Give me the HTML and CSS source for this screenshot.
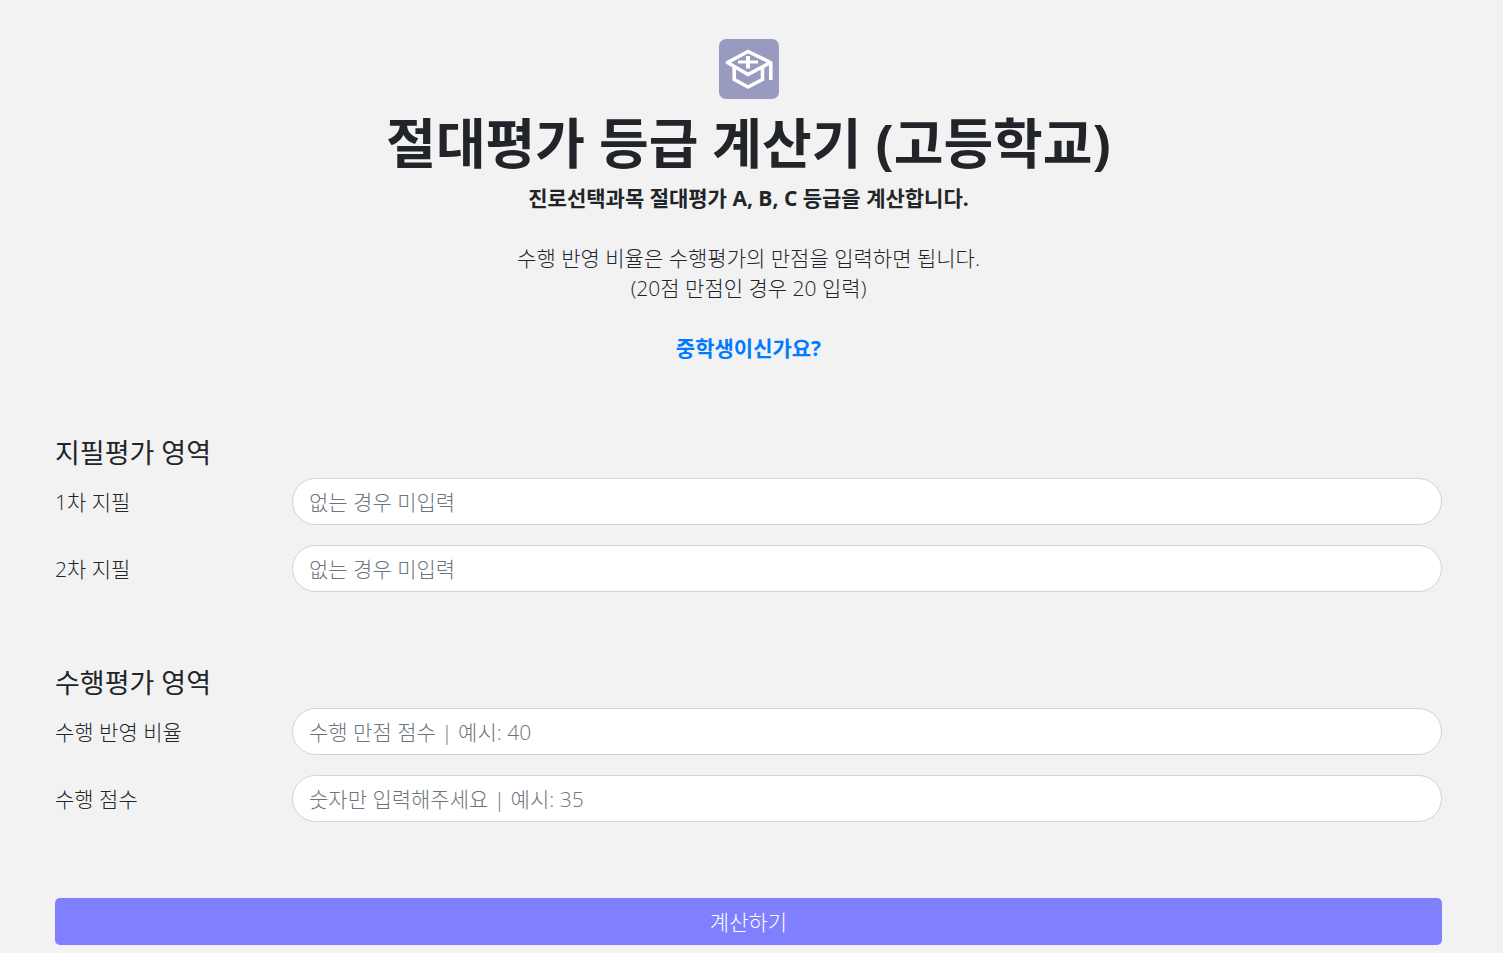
FILE: index.html
```html
<!DOCTYPE html>
<html lang="ko">
<head>
  <meta charset="UTF-8">
  <meta name="viewport" content="width=device-width, initial-scale=1">
  <title>절대평가 등급 계산기 (고등학교)</title>
  <link rel="stylesheet" href="styles.css">
</head>
<body>

  <div class="container">
    <!-- HEADER -->
    <header class="header">
      <svg class="logo" viewBox="0 0 60 60" aria-hidden="true">
        <rect width="60" height="60" rx="7" fill="#989bbf"/>
        <g fill="none" stroke="#fff" stroke-width="3.6" stroke-linejoin="round">
          <path d="M8.5 23.5 29 12.5 51.5 23.5 29 35.5Z"/>
          <path d="M15.2 28V40.5L29 48 43.5 40.5V28"/>
          <path d="M51.8 23.5V41"/>
          <path d="M29 17V29.5" stroke-width="4"/>
          <path d="M19 23H39" stroke-width="3"/>
        </g>
      </svg>
      <h1>절대평가 등급 계산기 (고등학교)</h1>
      <p><b>진로선택과목 절대평가 A, B, C 등급을 계산합니다.</b></p>
      <p>수행 반영 비율은 수행평가의 만점을 입력하면 됩니다.<br>(20점 만점인 경우 20 입력)</p>
      <a class="switch" href="#">중학생이신가요?</a>
    </header>

    <form>
      <!-- 지필평가 -->
      <section class="area">
        <h2>지필평가 영역</h2>
        <div class="row">
          <label for="exam1">1차 지필</label>
          <input type="text" id="exam1" placeholder="없는 경우 미입력">
        </div>
        <div class="row">
          <label for="exam2">2차 지필</label>
          <input type="text" id="exam2" placeholder="없는 경우 미입력">
        </div>
      </section>

      <!-- 수행평가 -->
      <section class="area">
        <h2>수행평가 영역</h2>
        <div class="row">
          <label for="ratio">수행 반영 비율</label>
          <input type="text" id="ratio" placeholder="수행 만점 점수 | 예시: 40">
        </div>
        <div class="row">
          <label for="score">수행 점수</label>
          <input type="text" id="score" placeholder="숫자만 입력해주세요 | 예시: 35">
        </div>
      </section>

      <button type="button" class="submit">계산하기</button>
    </form>
  </div>

</body>
</html>
```

FILE: styles.css
```css
* {
  box-sizing: border-box;
}
body {
  margin: 0;
  background: #f2f2f2;
  color: #212529;
  font-family: "Open Sans", "Noto Sans CJK KR", sans-serif;
  font-size: 21px;
  font-weight: 300;
  line-height: 30px;
}
.container {
  padding: 39px 61px 8px 55px;
}
.header {
  margin-bottom: 75px;
  text-align: center;
}
.logo {
  display: block;
  width: 60px;
  height: 60px;
  margin: 0 auto 14px;
}
h1 {
  margin: 0 0 10px;
  font-size: 54px;
  line-height: 60px;
  font-weight: 700;
}
p {
  margin: 0 0 30px;
}
b {
  font-weight: 700;
}
.switch {
  color: #007bff;
  font-weight: 700;
  text-decoration: none;
}
.area {
  margin-bottom: 76px;
}
h2 {
  margin: 0 0 10px;
  font-size: 27px;
  line-height: 30px;
  font-weight: 400;
}
.row {
  display: grid;
  grid-template-columns: 237px 1fr;
  align-items: center;
  margin-bottom: 20px;
}
.row:last-child {
  margin-bottom: 0;
}
.row input {
  width: 100%;
  height: 47px;
  padding: 0 16px;
  border: 1px solid #ced4da;
  border-radius: 25px;
  background: #fff;
  color: #495057;
  font: inherit;
}
.row input::placeholder {
  color: #6c757d;
  opacity: 1;
}
.submit {
  display: block;
  width: 100%;
  height: 47px;
  border: none;
  border-radius: 5px;
  background: #8080ff;
  color: #fff;
  font: inherit;
  cursor: pointer;
}
```
